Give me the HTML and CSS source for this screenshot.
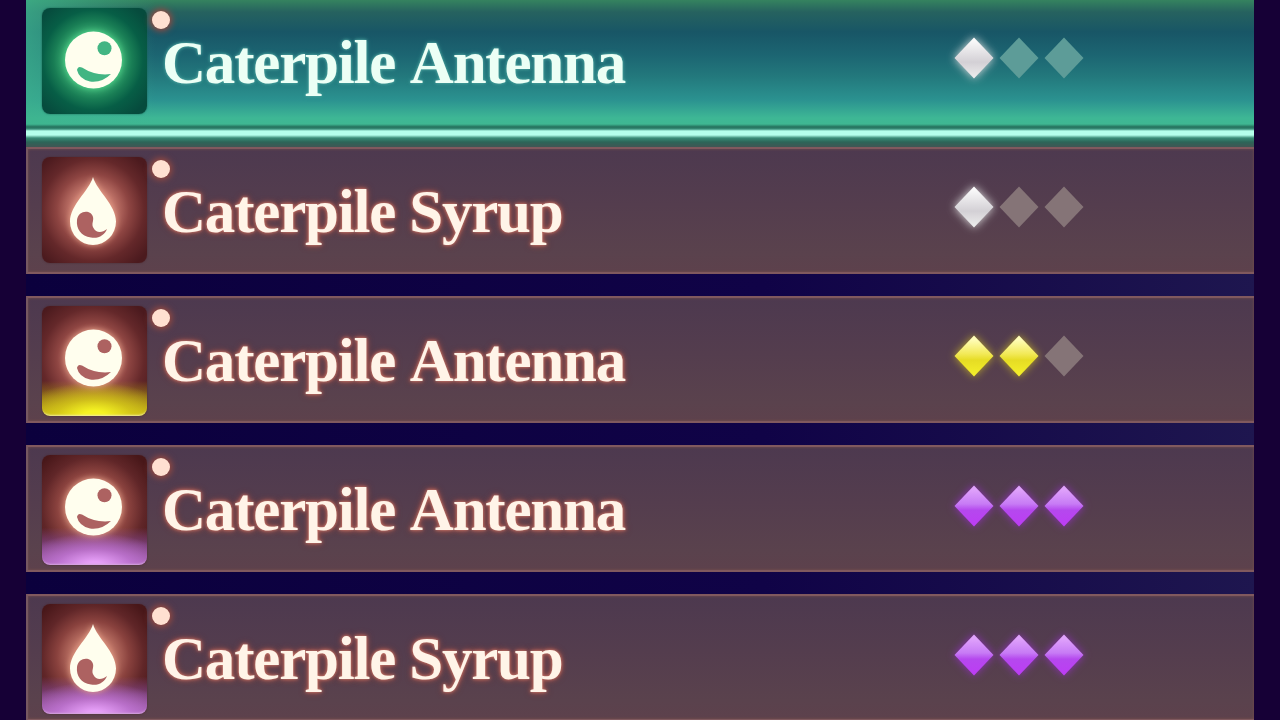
FILE: index.html
```
<!DOCTYPE html>
<html lang="en">
<head>
    <meta charset="UTF-8">
    <meta name="viewport" content="width=device-width, initial-scale=1.0">
    <title>Materials</title>
    <link rel="stylesheet" href="styles.css">
</head>
<body>

    <svg class="defs" width="0" height="0">
        <symbol id="face" viewBox="0 0 106 106">
            <circle cx="51.5" cy="52" r="28.5" fill="#fffeee"/>
            <circle class="hole" cx="62.5" cy="40.3" r="7"/>
            <path class="hole" d="M35 62 Q36 57.500 40 59.500 Q53 68 69 66 Q60 75 48 73.500 Q37 71 35 62Z"/>
        </symbol>
        <symbol id="drop" viewBox="0 0 106 106">
            <path fill="#fffeee" d="M51 20 C55 34 74 48 74 64.500 A23 23.500 0 0 1 28 64.500 C28 48 47 34 51 20Z"/>
            <path class="hole" d="M35 63 C36 53 49 52 51 60 C52 64 49 67 51.500 71 C54 76 60 76 65 72 C63 78 56 82 49 80.500 C39 79 34 72 35 63Z"/>
        </symbol>
        <linearGradient id="white" x1="0" y1="0" x2="0" y2="1">
            <stop offset="0" stop-color="#ffffff"/>
            <stop offset="0.6" stop-color="#d3d0d5"/>
            <stop offset="1" stop-color="#eeeeee"/>
        </linearGradient>
        <linearGradient id="yellow" x1="0" y1="0" x2="0" y2="1">
            <stop offset="0.1" stop-color="#fffdb8"/>
            <stop offset="0.45" stop-color="#f2e957"/>
            <stop offset="0.6" stop-color="#e6dc24"/>
            <stop offset="1" stop-color="#f5f12b"/>
        </linearGradient>
        <linearGradient id="purple" x1="0" y1="0" x2="0" y2="1">
            <stop offset="0.1" stop-color="#dfa2fb"/>
            <stop offset="0.45" stop-color="#c77bf5"/>
            <stop offset="0.6" stop-color="#b548ee"/>
            <stop offset="1" stop-color="#bd3cf5"/>
        </linearGradient>
        <symbol id="gem" viewBox="0 0 40 42">
            <path d="M20 0.500 L39.500 21 L20 41.500 L0.500 21Z"/>
        </symbol>
    </svg>

    <div class="list">
        <div class="item selected">
            <div class="icon">
                <svg><use href="#face"/></svg>
                <span class="new"></span>
            </div>
            <div class="name long">Caterpile Antenna</div>
            <div class="gems white">
                <svg class="on"><use href="#gem"/></svg>
                <svg><use href="#gem"/></svg>
                <svg><use href="#gem"/></svg>
            </div>
        </div>
        <div class="item">
            <div class="icon">
                <svg><use href="#drop"/></svg>
                <span class="new"></span>
            </div>
            <div class="name">Caterpile Syrup</div>
            <div class="gems white">
                <svg class="on"><use href="#gem"/></svg>
                <svg><use href="#gem"/></svg>
                <svg><use href="#gem"/></svg>
            </div>
        </div>
        <div class="item">
            <div class="icon rare">
                <svg><use href="#face"/></svg>
                <span class="new"></span>
            </div>
            <div class="name long">Caterpile Antenna</div>
            <div class="gems yellow">
                <svg class="on"><use href="#gem"/></svg>
                <svg class="on"><use href="#gem"/></svg>
                <svg><use href="#gem"/></svg>
            </div>
        </div>
        <div class="item">
            <div class="icon epic">
                <svg><use href="#face"/></svg>
                <span class="new"></span>
            </div>
            <div class="name long">Caterpile Antenna</div>
            <div class="gems purple">
                <svg class="on"><use href="#gem"/></svg>
                <svg class="on"><use href="#gem"/></svg>
                <svg class="on"><use href="#gem"/></svg>
            </div>
        </div>
        <div class="item">
            <div class="icon epic">
                <svg><use href="#drop"/></svg>
                <span class="new"></span>
            </div>
            <div class="name">Caterpile Syrup</div>
            <div class="gems purple">
                <svg class="on"><use href="#gem"/></svg>
                <svg class="on"><use href="#gem"/></svg>
                <svg class="on"><use href="#gem"/></svg>
            </div>
        </div>
    </div>

</body>
</html>
```
FILE: styles.css
```
body {
    margin: 0;
    height: 720px;
    overflow: hidden;
    background-color: #160036;
    font-family: "Liberation Serif", "Times New Roman", serif;
}
.defs {
    display: block;
}
.list {
    display: flex;
    flex-direction: column;
    gap: 22px;
    height: 720px;
    margin: 0 26px;
    overflow: hidden;
    background: linear-gradient(to right, #0b003d, #100347 60%, #1e164f);
}
.item {
    display: grid;
    grid-template-columns: 106px 792px 130px;
    flex-shrink: 0;
    column-gap: 14px;
    box-sizing: border-box;
    height: 127px;
    padding: 8px 0 0 14px;
    border: 2px solid #80595e;
    border-left-color: #765861;
    border-right: none;
    background: linear-gradient(#4d394f, #543d4e 45%, #5a424d 85%, #5d414c);
    box-shadow: inset 0 0 3px #78504d;
}
.item.selected {
    height: 147px;
    margin-bottom: -22px;
    padding: 8px 0 0 16px;
    border: none;
    background:
        linear-gradient(to right, rgba(62, 180, 142, 0.75), rgba(62, 180, 142, 0) 130px) 0 0 / 100% 124px no-repeat,
        linear-gradient(#35835f 0, #26625f 12px, #185666 32px, #1c6572 55px, #23797d 77px, #2b9290 100px, #3eb795 118px, #3fb792 124px, #246f5b 127px, #398e79 129px, #b5ffeb 131px, #b5ffeb 135px, #398b76 138px, #2c6558 142px, #405654 147px);
    box-shadow: none;
}
.icon {
    position: relative;
    width: 105px;
    height: 106px;
    border-radius: 8px;
    background: radial-gradient(circle at 51px 53px, #c77a6e 20px, #8e4542 36px, #64282a 51px, #4b1a1e 68px);
    box-shadow: 0 0 2px #4b2a30;
}
.icon svg {
    display: block;
    width: 106px;
    height: 106px;
    fill: #ad6261;
    filter: drop-shadow(0 0 3px #eaa48b);
}
.selected .icon {
    background: radial-gradient(circle at 51px 52px, #3fb476 25px, #197e55 39px, #075e46 50px, #064b3d 67px);
    box-shadow: 0 0 2px #17604f;
}
.selected .icon svg {
    fill: #42b583;
    filter: drop-shadow(0 0 3px #55dc91);
}
.icon.rare, .icon.epic {
    height: 110px;
}
.icon.rare {
    background:
        radial-gradient(ellipse 75px 34px at 50% 100%, #f5f323 15%, rgba(222, 211, 25, 0.7) 50%, rgba(190, 165, 20, 0) 100%),
        linear-gradient(rgba(190, 170, 20, 0) 68%, rgba(180, 155, 20, 0.6) 82%, rgba(205, 190, 20, 0.95)),
        radial-gradient(circle at 51px 53px, #c77a6e 20px, #8e4542 36px, #64282a 51px, #4b1a1e 68px);
    box-shadow: inset 0 -3px 2px -2px #eee99b, 0 0 2px #4b2a30;
}
.icon.epic {
    background:
        radial-gradient(ellipse 75px 32px at 50% 100%, #e7a0f8 10%, rgba(201, 124, 222, 0.7) 50%, rgba(151, 78, 160, 0) 100%),
        linear-gradient(rgba(130, 65, 140, 0) 66%, rgba(138, 75, 150, 0.75) 82%, rgba(164, 95, 181, 0.95)),
        radial-gradient(circle at 51px 53px, #bf7567 20px, #8a423e 36px, #602628 51px, #481719 68px);
    box-shadow: inset 0 -3px 2px -2px #d5a7de, 0 0 2px #4b2a30;
}
.new {
    position: absolute;
    top: 3px;
    left: 110px;
    width: 18px;
    height: 18px;
    border-radius: 50%;
    background-color: #ffe0d1;
    box-shadow: 0 0 6px 2px #994a40;
}
.name {
    padding-top: 20px;
    font-size: 61px;
    font-weight: bold;
    line-height: 70px;
    letter-spacing: -1.2px;
    white-space: nowrap;
    color: #fff4e8;
    text-shadow: 0 0 3px #ce7d70, 0 0 5px #b05e55, 0 0 7px #96463f;
}
.name.long {
    word-spacing: 4px;
}
.selected .name {
    color: #ecfff5;
    text-shadow: 0 0 3px #5db4ac, 0 0 5px #348b8b;
}
.gems {
    display: flex;
    gap: 5px;
    padding-top: 29px;
    margin-left: -14px;
}
.gems svg {
    width: 40px;
    height: 42px;
    fill: #857477;
}
.selected .gems svg {
    fill: #5d9c98;
}
.gems.white .on {
    fill: url(#white);
    filter: drop-shadow(0 0 5px #dddddd);
}
.gems.yellow .on {
    fill: url(#yellow);
    filter: drop-shadow(0 0 4px #b6a32c);
}
.gems.purple {
    padding-top: 30px;
}
.gems.purple .on {
    fill: url(#purple);
    filter: drop-shadow(0 0 4px #8d32b8);
}
```
